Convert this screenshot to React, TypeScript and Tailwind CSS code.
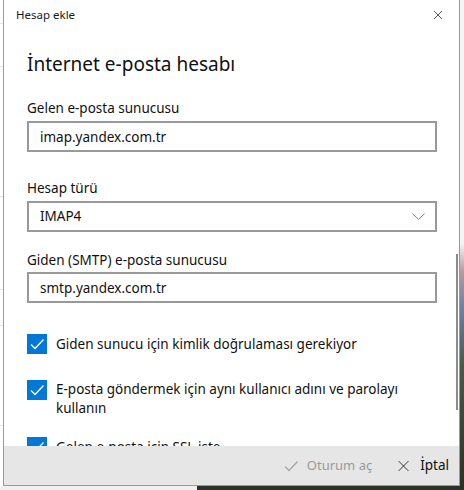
import { useState } from "react";

const font = { fontFamily: '"Noto Sans", "Open Sans", sans-serif' };

function CheckMark({ className }: { className?: string }) {
  return (
    <svg viewBox="0 0 16 16" className={className} fill="none" stroke="currentColor" strokeWidth="1.3">
      <path d="M2 8.5 L6 12.5 L14.5 3.5" />
    </svg>
  );
}

function Cross({ className }: { className?: string }) {
  return (
    <svg viewBox="0 0 16 16" className={className} fill="none" stroke="currentColor" strokeWidth="1.2">
      <path d="M1.5 1.5 L14.5 14.5 M14.5 1.5 L1.5 14.5" />
    </svg>
  );
}

function Checkbox({ checked, onToggle }: { checked: boolean; onToggle: () => void }) {
  return (
    <button
      onClick={onToggle}
      className={
        "w-[20px] h-[20px] shrink-0 flex items-center justify-center " +
        (checked ? "bg-[#0078d7]" : "border-2 border-[#333] bg-white")
      }
    >
      {checked && <CheckMark className="w-[16px] h-[16px] text-white" />}
    </button>
  );
}

export default function App() {
  const [incoming, setIncoming] = useState("imap.yandex.com.tr");
  const [outgoing, setOutgoing] = useState("smtp.yandex.com.tr");
  const [auth, setAuth] = useState(true);
  const [sameUser, setSameUser] = useState(true);
  const [ssl, setSsl] = useState(true);

  return (
    <div className="w-[464px] h-[490px] overflow-hidden flex flex-col bg-[#f0f0f0]" style={font}>
      <div className="flex h-[486px]">
        {/* app window behind the dialog */}
        <div className="w-[3px] bg-white flex flex-col">
          <div className="h-[24px] border-b border-[#e3e3e3]" />
          <div className="h-[43px] border-b border-[#e3e3e3]" />
          <div className="h-[130px] border-b border-[#e3e3e3]" />
          <div className="h-[93px] border-b border-[#e3e3e3]" />
          <div className="h-[36px] border-b border-[#e3e3e3]" />
          <div className="h-[100px] border-b border-[#e3e3e3]" />
        </div>

        {/* dialog */}
        <div className="w-[457px] flex flex-col bg-white border-l border-r border-b border-[#9a9a9a]">
          <div className="h-[30px] shrink-0 flex items-center justify-between pl-[12px] pr-[16px]">
            <span className="text-[11.5px] text-[#1a1a1a]">Hesap ekle</span>
            <Cross className="w-[10px] h-[10px] text-[#222]" />
          </div>

          <div className="relative flex-1 overflow-hidden pl-[23px] pr-[22px]">
            <h1 className="mt-[20px] h-[28px] leading-[28px] text-[19px] text-[#111]">İnternet e-posta hesabı</h1>

            <label className="block mt-[20px] h-[20px] leading-[20px] text-[13.5px] text-[#111]">Gelen e-posta sunucusu</label>
            <input
              value={incoming}
              onChange={(e) => setIncoming(e.target.value)}
              className="mt-[3px] w-full h-[31px] border-2 border-[#999] px-[11px] text-[13.5px] text-[#111] outline-none"
            />

            <label className="block mt-[26px] h-[20px] leading-[20px] text-[13.5px] text-[#111]">Hesap türü</label>
            <div className="mt-[3px] w-full h-[31px] border-2 border-[#999] pl-[11px] pr-[10px] flex items-center justify-between text-[13.5px] text-[#111]">
              <span>IMAP4</span>
              <svg viewBox="0 0 14 7" className="w-[13px] h-[7px]" fill="none" stroke="#7a7a7a" strokeWidth="1">
                <path d="M0.5 0.5 L7 6.5 L13.5 0.5" />
              </svg>
            </div>

            <label className="block mt-[18px] h-[20px] leading-[20px] text-[13.5px] text-[#111]">Giden (SMTP) e-posta sunucusu</label>
            <input
              value={outgoing}
              onChange={(e) => setOutgoing(e.target.value)}
              className="mt-[2px] w-full h-[31px] border-2 border-[#999] px-[11px] text-[13.5px] text-[#111] outline-none"
            />

            <div className="mt-[31px] flex items-center gap-[9px]">
              <Checkbox checked={auth} onToggle={() => setAuth(!auth)} />
              <span className="text-[13.5px] leading-[20px] text-[#111]">Giden sunucu için kimlik doğrulaması gerekiyor</span>
            </div>

            <div className="mt-[26px] flex items-start gap-[9px]">
              <Checkbox checked={sameUser} onToggle={() => setSameUser(!sameUser)} />
              <span className="max-w-[350px] text-[13.5px] leading-[19px] text-[#111]">
                E-posta göndermek için aynı kullanıcı adını ve parolayı kullanın
              </span>
            </div>

            <div className="mt-[19px] flex items-center gap-[9px]">
              <Checkbox checked={ssl} onToggle={() => setSsl(!ssl)} />
              <span className="text-[13.5px] leading-[20px] text-[#111]">Gelen e-posta için SSL iste</span>
            </div>

            {/* scrollbar thumb */}
            <div className="absolute right-[1px] top-[224px] w-[2px] h-[156px] bg-[#8c8c8c]" />
          </div>

          <div className="h-[39px] shrink-0 bg-[#e6e6e6] flex items-center justify-end pr-[10px] gap-[25px]">
            <button className="flex items-center gap-[7px] text-[13px] text-[#9a9a9a]">
              <CheckMark className="w-[18px] h-[16px] text-[#a6a6a6]" />
              <span>Oturum aç</span>
            </button>
            <button className="flex items-center gap-[10px] text-[13.5px] text-[#111]">
              <Cross className="w-[13px] h-[12px] text-[#222]" />
              <span>İptal</span>
            </button>
          </div>
        </div>

        {/* wallpaper on the right */}
        <div className="flex-1 bg-[linear-gradient(to_bottom,#f4f4f4_0%,#f4f4f4_50%,#b49aa0_56%,#6a7fa0_64%,#4a5a4a_75%,#2a3324_100%)]" />
      </div>
      <div className="flex h-[4px]">
        <div className="w-[197px] bg-[#f0f0f0]" />
        <div className="flex-1 bg-[#2b3126]" />
      </div>
    </div>
  );
}
